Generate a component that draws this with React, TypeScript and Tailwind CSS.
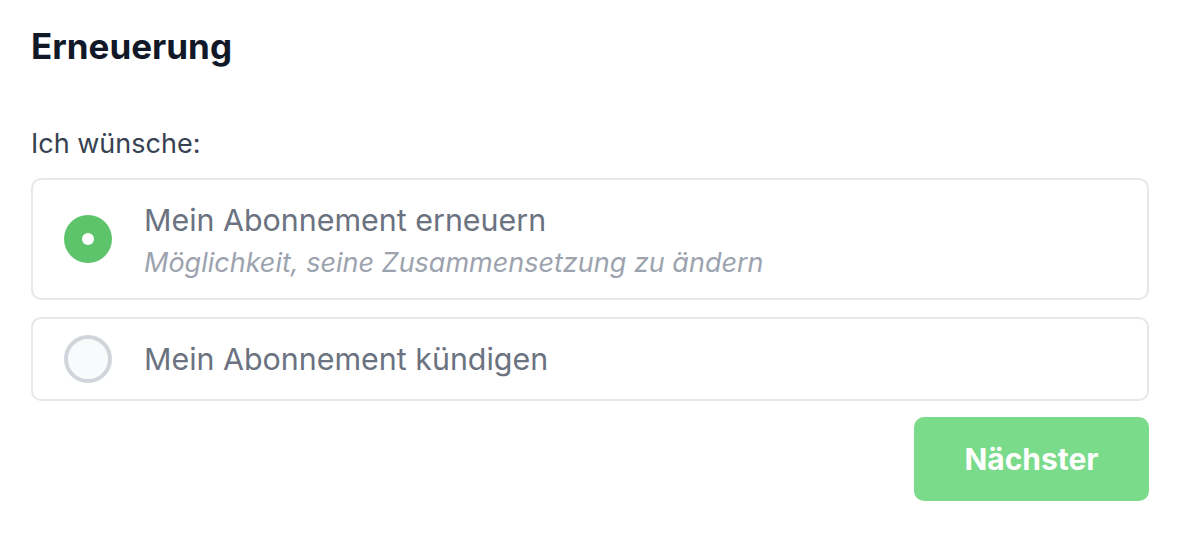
import { useState } from 'react';

const options = [
    { id: 'renew', label: 'Mein Abonnement erneuern', hint: 'Möglichkeit, seine Zusammensetzung zu ändern' },
    { id: 'cancel', label: 'Mein Abonnement kündigen' },
];

export default function App() {
    const [selected, setSelected] = useState('renew');

    return (
        <div className="w-[1188px] h-[538px] bg-white pl-[31px] pr-[39px] pt-[26px]" style={{ fontFamily: 'Inter, "Noto Sans", sans-serif' }}>
            <h2 className="text-[35px] leading-[40px] font-bold text-[#111827]">Erneuerung</h2>

            <p className="mt-[60px] text-[27px] leading-[36px] text-[#374151]">Ich wünsche:</p>

            <div className="mt-[16px] flex flex-col gap-[17px]">
                {options.map((opt) => {
                    const active = selected === opt.id;
                    return (
                        <label
                            key={opt.id}
                            onClick={() => setSelected(opt.id)}
                            className={`flex items-center rounded-[10px] border-2 border-[#e5e7eb] pl-[31px] pr-6 cursor-pointer ${opt.hint ? 'h-[122px]' : 'h-[84px]'}`}
                        >
                            {active ? (
                                <span className="flex items-center justify-center w-[48px] h-[48px] rounded-full bg-[#5ec46b] shrink-0">
                                    <span className="w-[12px] h-[12px] rounded-full bg-white" />
                                </span>
                            ) : (
                                <span className="w-[48px] h-[48px] rounded-full border-4 border-[#d1d5db] bg-[#f9fafb] shrink-0" />
                            )}
                            <div className={`ml-[32px] flex flex-col ${opt.hint ? 'pt-[3px]' : ''}`}>
                                <span className="text-[30.4px] leading-[40px] text-[#6b7280]">{opt.label}</span>
                                {opt.hint && (
                                    <span className="mt-[5px] text-[27px] leading-[36px] italic text-[#9ca3af]">{opt.hint}</span>
                                )}
                            </div>
                        </label>
                    );
                })}
            </div>

            <div className="mt-[16px] flex justify-end">
                <button className="w-[235px] h-[84px] rounded-[10px] bg-[#7adb8a] text-white text-[30px] font-bold">
                    Nächster
                </button>
            </div>
        </div>
    );
}
